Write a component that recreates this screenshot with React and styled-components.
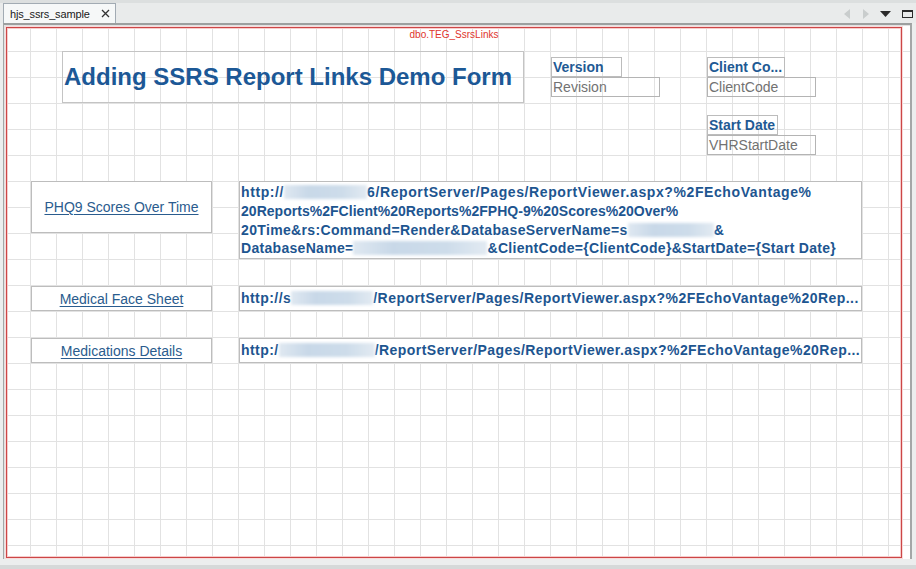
import styled, { createGlobalStyle } from 'styled-components'

const GlobalStyle = createGlobalStyle`
  html, body {
    margin: 0;
    padding: 0;
    background: #e9ebeb;
  }
  body {
    font-family: 'Liberation Sans', Arial, sans-serif;
  }
`

const reports = [
  {
    name: 'Medical Face Sheet',
    prefix: 'http://s',
    blur: 82,
  },
  {
    name: 'Medications Details',
    prefix: 'http:/',
    blur: 96,
  },
]

export default function App() {
  return (
    <>
      <GlobalStyle />
      <SCWindow>
        <SCTabBar>
          <SCTab>
            <SCTabTitle>hjs_ssrs_sample</SCTabTitle>
            <svg width="9" height="9" viewBox="0 0 9 9">
              <path d="M1 1 L8 8 M8 1 L1 8" stroke="#333" strokeWidth="1.3" />
            </svg>
          </SCTab>
          <SCTabTools>
            <svg width="7" height="10" viewBox="0 0 7 10">
              <path d="M6 0 L0 5 L6 10 Z" fill="#c9cdcd" />
            </svg>
            <svg width="7" height="10" viewBox="0 0 7 10">
              <path d="M1 0 L7 5 L1 10 Z" fill="#c9cdcd" />
            </svg>
            <svg width="11" height="6" viewBox="0 0 11 6">
              <path d="M0 0 L11 0 L5.5 6 Z" fill="#2b2b2b" />
            </svg>
            <svg width="11" height="8" viewBox="0 0 11 8">
              <rect x="0.5" y="0.5" width="10" height="7" fill="none" stroke="#2b2b2b" />
              <line x1="0.5" y1="1.5" x2="10.5" y2="1.5" stroke="#2b2b2b" />
            </svg>
          </SCTabTools>
        </SCTabBar>
        <SCFrame>
          <SCCanvas>
            <SCForm>
              <SCCaption>dbo.TEG_SsrsLinks</SCCaption>

              <SCHeader>
                <SCTitle>Adding SSRS Report Links Demo Form</SCTitle>

                <SCFieldGroup>
                  <SCLabel $w={71}>Version</SCLabel>
                  <SCField>Revision</SCField>
                </SCFieldGroup>

                <SCFieldColumn>
                  <SCFieldGroup>
                    <SCLabel $w={78}>Client Co...</SCLabel>
                    <SCField>ClientCode</SCField>
                  </SCFieldGroup>
                  <SCFieldGroup>
                    <SCLabel $w={71}>Start Date</SCLabel>
                    <SCField>VHRStartDate</SCField>
                  </SCFieldGroup>
                </SCFieldColumn>
              </SCHeader>

              <SCReportList>
                <SCReportRow>
                  <SCLinkButton $h={52}>
                    <span>PHQ9 Scores Over Time</span>
                  </SCLinkButton>
                  <SCUrlBox $h={78}>
                    <SCUrlLine $ls={0.6}>
                      http://<SCBlur $w={83} />6/ReportServer/Pages/ReportViewer.aspx?%2FEchoVantage%
                    </SCUrlLine>
                    <SCUrlLine $ls={0.03}>20Reports%2FClient%20Reports%2FPHQ-9%20Scores%20Over%</SCUrlLine>
                    <SCUrlLine $ls={0.35}>
                      20Time&amp;rs:Command=Render&amp;DatabaseServerName=s<SCBlur $w={86} />&amp;
                    </SCUrlLine>
                    <SCUrlLine $ls={0.3}>
                      DatabaseName=<SCBlur $w={134} />&amp;ClientCode={'{'}ClientCode{'}'}&amp;StartDate={'{'}Start Date{'}'}
                    </SCUrlLine>
                  </SCUrlBox>
                </SCReportRow>

                {reports.map(r => (
                  <SCReportRow key={r.name}>
                    <SCLinkButton $h={25}>
                      <span>{r.name}</span>
                    </SCLinkButton>
                    <SCUrlBox $h={25} $single>
                      <SCUrlLine $ls={0.45}>
                        {r.prefix}<SCBlur $w={r.blur} />/ReportServer/Pages/ReportViewer.aspx?%2FEchoVantage%20Rep...
                      </SCUrlLine>
                    </SCUrlBox>
                  </SCReportRow>
                ))}
              </SCReportList>
            </SCForm>
          </SCCanvas>
        </SCFrame>
      </SCWindow>
    </>
  )
}

const SCWindow = styled.div`
  width: 916px;
  height: 569px;
  box-sizing: border-box;
  background: #eceeee;
  border-bottom: 4px solid #d6d9d9;
  overflow: hidden;
`

const SCTabBar = styled.div`
  height: 23px;
  box-sizing: border-box;
  border-top: 3px solid #dcdfdf;
  background: #e9ebeb;
  display: flex;
  align-items: flex-end;
  justify-content: space-between;
  padding-left: 3px;
`

const SCTab = styled.div`
  width: 113px;
  height: 20px;
  box-sizing: border-box;
  background: #f6f8f8;
  border: 1px solid #a2abb3;
  border-bottom: none;
  display: flex;
  align-items: center;
  justify-content: space-between;
  padding: 0 5px 0 6px;
`

const SCTabTitle = styled.span`
  font-family: 'Liberation Sans', Arial, sans-serif;
  font-size: 11px;
  letter-spacing: -0.15px;
  color: #1a1a1a;
`

const SCTabTools = styled.div`
  display: flex;
  align-items: center;
  gap: 11px;
  align-self: center;
  padding-right: 3px;
  margin-top: 2px;
`

const SCFrame = styled.div`
  margin-left: 3px;
  width: 909px;
  box-sizing: border-box;
  border-top: 2px solid #9c9f9f;
  border-left: 1px solid #a4a7a7;
  border-right: 2px solid #a4a7a7;
`

const SCCanvas = styled.div`
  height: 534px;
  background-color: #ffffff;
  background-image:
    linear-gradient(to right, transparent 25px, #e2e2e2 25px),
    linear-gradient(to bottom, transparent 25px, #e2e2e2 25px);
  background-size: 26px 26px;
  background-position: 1px 1px;
  padding: 2px;
  box-sizing: border-box;
`

const SCForm = styled.div`
  width: 896px;
  height: 531px;
  box-sizing: border-box;
  border: 1px solid #cc4646;
  box-shadow: inset 0 0 0 1px #f6cccc, 0 0 0 1px #f8dada;
  padding-top: 1px;
  display: flex;
  flex-direction: column;
`

const SCCaption = styled.div`
  text-align: center;
  font-size: 10px;
  line-height: 12px;
  color: #e0342c;
`

const SCHeader = styled.div`
  margin-top: 10px;
  padding-left: 55px;
  display: grid;
  grid-template-columns: 489px 156px 109px;
  align-items: start;
`

const SCTitle = styled.div`
  width: 462px;
  height: 52px;
  box-sizing: border-box;
  border: 1px solid #c4c4c4;
  display: flex;
  align-items: center;
  padding-left: 1px;
  font-size: 24px;
  font-weight: 700;
  color: #1c5896;
  white-space: nowrap;
`

const SCFieldColumn = styled.div`
  display: flex;
  flex-direction: column;
  gap: 18px;
`

const SCFieldGroup = styled.div`
  display: flex;
  flex-direction: column;
  align-items: flex-start;
  margin-top: 6px;
  & + & {
    margin-top: 0;
  }
`

const SCLabel = styled.div`
  width: ${p => p.$w}px;
  height: 20px;
  box-sizing: border-box;
  border: 1px solid #bcbcbc;
  display: flex;
  align-items: center;
  padding-left: 1px;
  font-size: 14px;
  font-weight: 700;
  color: #1f5a94;
  white-space: nowrap;
`

const SCField = styled.div`
  width: 109px;
  height: 20px;
  box-sizing: border-box;
  border: 1px solid #b4b4b4;
  display: flex;
  align-items: center;
  padding-left: 1px;
  font-size: 14px;
  color: #727272;
  white-space: nowrap;
`

const SCReportList = styled.div`
  margin-top: 26px;
  padding-left: 24px;
  display: flex;
  flex-direction: column;
  gap: 27px;
`

const SCReportRow = styled.div`
  display: flex;
  align-items: flex-start;
  gap: 27px;
`

const SCLinkButton = styled.div`
  width: 181px;
  height: ${p => p.$h}px;
  box-sizing: border-box;
  border: 1px solid #bdbdbd;
  background: #ffffff;
  display: flex;
  align-items: center;
  justify-content: center;
  font-size: 14px;
  color: #2a5c8e;
  span {
    text-decoration: underline;
    text-underline-offset: 2px;
  }
`

const SCUrlBox = styled.div`
  width: 623px;
  height: ${p => p.$h}px;
  box-sizing: border-box;
  border: 1px solid #bdbdbd;
  background: #ffffff;
  padding: ${p => (p.$single ? '0 0 0 1px' : '1px 0 0 1px')};
  display: flex;
  flex-direction: column;
  justify-content: ${p => (p.$single ? 'center' : 'flex-start')};
  overflow: hidden;
`

const SCUrlLine = styled.div`
  font-size: 14px;
  font-weight: 700;
  line-height: 19px;
  letter-spacing: ${p => p.$ls}px;
  color: #1d5590;
  white-space: nowrap;
  overflow: hidden;
`

const SCBlur = styled.span`
  display: inline-block;
  width: ${p => p.$w}px;
  height: 14px;
  vertical-align: -2px;
  background: linear-gradient(to right, #dfe8f1, #c8d8e8 30%, #cddcea 70%, #e2eaf2);
  filter: blur(1.5px);
`
